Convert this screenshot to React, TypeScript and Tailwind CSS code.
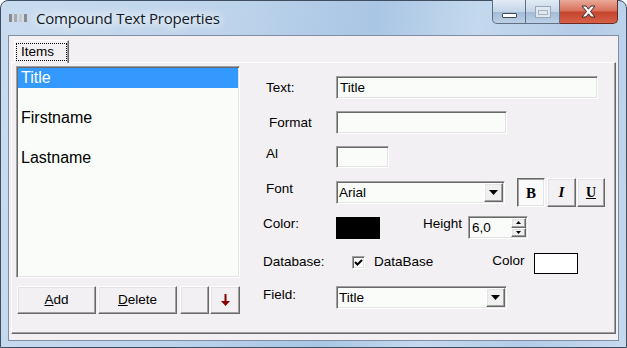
import React from "react";

const sunken =
  "border border-t-[#a0a0a0] border-l-[#a0a0a0] border-r-white border-b-white shadow-[inset_1px_1px_0_#696969,inset_-1px_-1px_0_#e3e3e3]";
const raised =
  "border border-t-white border-l-white border-r-[#696969] border-b-[#696969] shadow-[inset_-1px_-1px_0_#a0a0a0,inset_1px_1px_0_#e3e3e3]";
const pressed =
  "border border-t-[#696969] border-l-[#696969] border-r-white border-b-white shadow-[inset_1px_1px_0_#a0a0a0,inset_-1px_-1px_0_#e3e3e3]";

function Caret() {
  return (
    <svg width="9" height="5" viewBox="0 0 9 5">
      <path d="M0 0h9L4.5 5z" fill="#000" />
    </svg>
  );
}

function Select({ className, value }: { className: string; value: string }) {
  return (
    <div className={`${sunken} ${className} h-[23px] bg-[#f9fcf9] flex items-stretch p-px`}>
      <span className="flex-1 flex items-center pl-[1px] text-[13.5px] text-black leading-none">{value}</span>
      <div className={`${raised} w-[19px] bg-[#f0f0f0] flex items-center justify-center`}>
        <Caret />
      </div>
    </div>
  );
}

function Input({ className, value }: { className: string; value?: string }) {
  return (
    <div className={`${sunken} ${className} bg-[#f9fcf9] flex items-center pl-[3px] text-[13.5px] text-black leading-none`}>
      {value}
    </div>
  );
}

function Label({ children, className = "" }: { children: React.ReactNode; className?: string }) {
  return <span className={`w-[73px] shrink-0 text-[13.5px] text-black leading-none ${className}`}>{children}</span>;
}

export default function App() {
  return (
    <div className="w-[627px] h-[348px] overflow-hidden bg-white font-['Liberation_Sans',Arial,sans-serif]">
      <div className="w-full h-full flex flex-col rounded-t-[8px] border border-[#3f4e60] bg-[linear-gradient(100deg,#c9dcef_0%,#bcd3eb_35%,#a9c6e4_55%,#c4d9ee_70%,#b3cce7_85%,#c6daef_100%)] px-[7px] pb-[6px]">
        {/* Title bar */}
        <div className="h-[34px] flex items-start">
          <div className="mt-[13px] ml-[1px] flex gap-[2px]">
            <div className="w-[3px] h-[8px] bg-[#8a8a8a]" />
            <div className="w-[3px] h-[8px] bg-[#a8a8a8]" />
            <div className="w-[3px] h-[8px] bg-[#c8c8c8]" />
            <div className="w-[3px] h-[8px] bg-[#8a8a8a]" />
          </div>
          <span className="ml-[9px] mt-[7px] text-[15px] leading-[20px] text-[#101828] font-['Open_Sans',sans-serif] tracking-[-0.2px] [text-shadow:0_0_8px_#fff,0_0_12px_#fff,0_0_16px_#fff]">
            Compound Text Properties
          </span>
          <div className="ml-auto -mt-px mr-[1px] flex">
            <div className="w-[34px] h-[24px] rounded-bl-[5px] border border-[#5f7086] border-t-0 bg-[linear-gradient(#e2ebf5,#c5d5e8_50%,#a3bad5_51%,#bdd0e6)] flex items-center justify-center">
              <div className="w-[15px] h-[5px] mt-[8px] bg-white border border-[#404a58] rounded-[1px]" />
            </div>
            <div className="w-[34px] h-[24px] border-r border-b border-[#5f7086] bg-[linear-gradient(#e2ebf5,#c5d5e8_50%,#a3bad5_51%,#bdd0e6)] flex items-center justify-center">
              <div className="w-[16px] h-[12px] border border-[#9aa6b4] bg-[#dfe7f1] flex items-center justify-center">
                <div className="w-[10px] h-[5px] mt-[1px] border border-[#a7b2bf]" />
              </div>
            </div>
            <div className="w-[58px] h-[24px] rounded-br-[5px] border-r border-b border-[#6b2a20] bg-[linear-gradient(#e9a999,#d8705b_48%,#c4432c_52%,#d7614a)] flex items-center justify-center">
              <svg width="17" height="13" viewBox="0 0 17 13">
                <path d="M2 1h4l2.5 3.2L11 1h4l-4.5 5.5L15 12h-4L8.5 8.8 6 12H2l4.5-5.5z" fill="#fff" stroke="#3a2a2a" strokeWidth="1" strokeLinejoin="round" />
              </svg>
            </div>
          </div>
        </div>

        {/* Client area */}
        <div className="flex-1 border border-[#7f8ea2] bg-[#f2f0f2] flex flex-col px-[2px] pb-[6px]">
          {/* tab header */}
          <div className="mt-[4px] ml-[3px] h-[23px] flex items-end relative z-10 -mb-px">
            <div className="h-[23px] w-[55px] border-t border-l border-white border-r border-r-[#696969] shadow-[inset_-1px_0_0_#a0a0a0] bg-[#f2f0f2] flex items-start pt-[2px] pl-[1px]">
              <div className="h-[18px] w-[51px] border border-dotted border-black flex items-center pl-[4px] text-[13.5px] leading-none text-black">
                Items
              </div>
            </div>
          </div>
          {/* tab panel */}
          <div className="flex-1 border-t border-l border-white border-r border-b border-r-[#696969] border-b-[#696969] shadow-[inset_-1px_-1px_0_#a0a0a0] flex">
            {/* Left column */}
            <div className="ml-[4px] mt-[3px] w-[224px] flex flex-col">
              <div className={`${sunken} h-[212px] bg-[#f9fcf9] p-px flex flex-col`}>
                <div className="h-[20px] bg-[#3399ff] text-white text-[16px] leading-none flex items-center pl-[3px]">Title</div>
                <div className="h-[20px] mt-[20px] text-black text-[16px] leading-none flex items-center pl-[3px]">Firstname</div>
                <div className="h-[20px] mt-[20px] text-black text-[16px] leading-none flex items-center pl-[3px]">Lastname</div>
              </div>
              <div className="mt-[8px] flex h-[28px] ml-[1px]">
                <div className={`${raised} w-[79px] bg-[#f2f0f2] flex items-center justify-center text-[13.5px] leading-none text-black`}>
                  <span><span className="underline">A</span>dd</span>
                </div>
                <div className={`${raised} ml-[2px] w-[79px] bg-[#f2f0f2] flex items-center justify-center text-[13.5px] leading-none text-black`}>
                  <span><span className="underline">D</span>elete</span>
                </div>
                <div className={`${raised} ml-[3px] w-[29px] bg-[#f2f0f2]`} />
                <div className={`${raised} ml-[1px] w-[30px] bg-[#f2f0f2] flex items-center justify-center`}>
                  <svg width="9" height="12" viewBox="0 0 9 12">
                    <path d="M3.5 0h2v7H9L4.5 12 0 7h3.5z" fill="#8b0000" />
                  </svg>
                </div>
              </div>
            </div>

            {/* Right column */}
            <div className="ml-[23px] mt-[13px] flex flex-col">
              <div className="h-[23px] flex items-center">
                <Label className="pl-[3px]">Text:</Label>
                <Input className="w-[262px] h-[23px]" value="Title" />
              </div>
              <div className="h-[23px] mt-[12px] flex items-center">
                <Label className="pl-[6px]">Format</Label>
                <Input className="w-[171px] h-[23px]" />
              </div>
              <div className="h-[22px] mt-[12px] flex items-center">
                <Label className="pl-[3px] mb-[6px]">Al</Label>
                <Input className="w-[53px] h-[22px]" />
              </div>
              <div className="h-[29px] mt-[10px] flex items-center">
                <Label className="pl-[3px] mb-[7px]">Font</Label>
                <Select className="w-[169px]" value="Arial" />
                <div className={`${pressed} ml-[12px] w-[28px] h-[29px] bg-[#fbfafb] flex items-center justify-center font-['Liberation_Serif',serif] font-bold text-[15px] leading-none text-black pt-[2px]`}>
                  B
                </div>
                <div className={`${raised} ml-[2px] w-[29px] h-[29px] bg-[#f2f0f2] flex items-center justify-center font-['Liberation_Serif',serif] font-bold italic text-[15px] leading-none text-black`}>
                  I
                </div>
                <div className={`${raised} ml-[1px] w-[28px] h-[29px] bg-[#f2f0f2] flex items-center justify-center font-['Liberation_Serif',serif] font-bold text-[14px] leading-none text-black underline`}>
                  U
                </div>
              </div>
              <div className="h-[23px] mt-[9px] flex items-center">
                <Label className="mb-[7px]">Color:</Label>
                <div className="w-[44px] h-[22px] bg-black" />
                <span className="ml-[43px] mb-[7px] text-[13.5px] leading-none text-black">Height</span>
                <div className={`${sunken} ml-[6px] w-[60px] h-[23px] bg-[#f9fcf9] flex items-stretch p-px`}>
                  <span className="flex-1 flex items-center pl-[2px] text-[13.5px] leading-none text-black">6,0</span>
                  <div className="w-[15px] flex flex-col">
                    <div className={`${raised} flex-1 bg-[#f0f0f0] flex items-center justify-center`}>
                      <svg width="5" height="3" viewBox="0 0 5 3"><path d="M0 3h5L2.5 0z" fill="#000" /></svg>
                    </div>
                    <div className={`${raised} flex-1 bg-[#f0f0f0] flex items-center justify-center`}>
                      <svg width="5" height="3" viewBox="0 0 5 3"><path d="M0 0h5L2.5 3z" fill="#000" /></svg>
                    </div>
                  </div>
                </div>
              </div>
              <div className="h-[21px] mt-[14px] flex items-center">
                <Label className="mb-[3px]">Database:</Label>
                <div className={`${sunken} ml-[16px] mb-[2px] w-[13px] h-[13px] bg-white flex items-center justify-center`}>
                  <svg width="9" height="9" viewBox="0 0 9 9">
                    <path d="M1 4l2.5 2.5L8 2" fill="none" stroke="#000" strokeWidth="2" />
                  </svg>
                </div>
                <span className="ml-[9px] mb-[3px] text-[13.5px] leading-none text-black">DataBase</span>
                <span className="ml-[59px] mb-[5px] text-[13.5px] leading-none text-black">Color</span>
                <div className="ml-[9px] w-[44px] h-[21px] bg-white border border-black" />
              </div>
              <div className="h-[23px] mt-[12px] flex items-center">
                <Label className="mb-[5px]">Field:</Label>
                <Select className="w-[171px]" value="Title" />
              </div>
            </div>
          </div>
        </div>
      </div>
    </div>
  );
}
